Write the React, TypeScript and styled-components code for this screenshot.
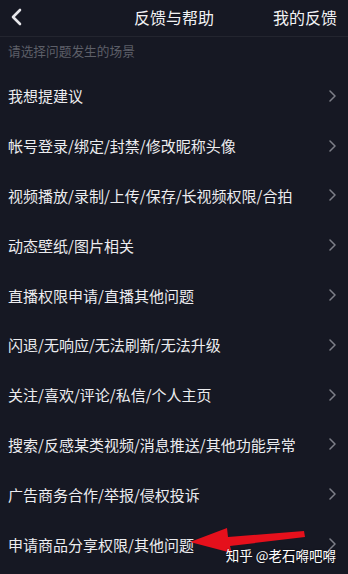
import React from "react";
import styled, { createGlobalStyle } from "styled-components";

const Global = createGlobalStyle`
  html, body { margin: 0; padding: 0; background: #161823; }
  body { font-family: "Noto Sans CJK SC", "Noto Sans", sans-serif; }
`;

const Page = styled.div`
  position: relative;
  width: 348px;
  height: 574px;
  overflow: hidden;
  background: #161823;
  color: #ececef;
`;

const Header = styled.header`
  height: 37px;
  box-sizing: border-box;
  padding-bottom: 3px;
  display: grid;
  grid-template-columns: 1fr auto 1fr;
  align-items: center;
  border-bottom: 1px solid #23252f;
`;

const BackButton = styled.button`
  justify-self: start;
  background: none;
  border: 0;
  padding: 0 0 0 10px;
  display: flex;
  align-items: center;
  cursor: pointer;
`;

const Title = styled.h1`
  margin: 0;
  font-size: 16px;
  font-weight: 400;
  color: #f2f2f4;
  line-height: 22px;
`;

const HeaderAction = styled.span`
  justify-self: end;
  padding-right: 11px;
  font-size: 16px;
  color: #f2f2f4;
  line-height: 22px;
`;

const Hint = styled.div`
  height: 34px;
  box-sizing: border-box;
  padding: 5px 0 0 8px;
  font-size: 12.7px;
  line-height: 18px;
  color: #5d5f68;
`;

const List = styled.ul`
  list-style: none;
  margin: 0;
  padding: 0;
`;

const Row = styled.li`
  height: 49.8px;
  display: flex;
  align-items: center;
  justify-content: space-between;
  padding: 0 12px 0 8px;
  font-size: 15px;
  color: #ececef;
`;

const Watermark = styled.span`
  position: absolute;
  right: 12px;
  top: 545px;
  font-size: 13.5px;
  line-height: 20px;
  color: #ffffff;
  text-shadow: 0 0 2px rgba(0, 0, 0, 0.6);
`;

const Arrow = styled.svg`
  position: absolute;
  left: 186px;
  top: 522px;
`;

const Chevron = () => (
  <svg width="7" height="12" viewBox="0 0 7 12">
    <path d="M1 1 L6 6 L1 11" fill="none" stroke="#7d7f88" strokeWidth="1.5" strokeLinecap="round" strokeLinejoin="round" />
  </svg>
);

const items = [
  "我想提建议",
  "帐号登录/绑定/封禁/修改昵称头像",
  "视频播放/录制/上传/保存/长视频权限/合拍",
  "动态壁纸/图片相关",
  "直播权限申请/直播其他问题",
  "闪退/无响应/无法刷新/无法升级",
  "关注/喜欢/评论/私信/个人主页",
  "搜索/反感某类视频/消息推送/其他功能异常",
  "广告商务合作/举报/侵权投诉",
  "申请商品分享权限/其他问题",
];

export default function App() {
  return (
    <>
      <Global />
      <Page>
        <Header>
          <BackButton aria-label="返回">
            <svg width="14" height="18" viewBox="0 0 14 18">
              <path d="M10 2 L3 9 L10 16" fill="none" stroke="#e6e6ea" strokeWidth="2.6" strokeLinecap="round" strokeLinejoin="round" />
            </svg>
          </BackButton>
          <Title>反馈与帮助</Title>
          <HeaderAction>我的反馈</HeaderAction>
        </Header>
        <Hint>请选择问题发生的场景</Hint>
        <List>
          {items.map((t) => (
            <Row key={t}>
              <span>{t}</span>
              <Chevron />
            </Row>
          ))}
        </List>
        <Arrow width="124" height="36" viewBox="0 0 124 36">
          <polygon points="4,20 41,6 42,15 118,9 119,15 44,24 46,31" fill="#e5101c" />
        </Arrow>
        <Watermark>知乎 @老石嘚吧嘚</Watermark>
      </Page>
    </>
  );
}
